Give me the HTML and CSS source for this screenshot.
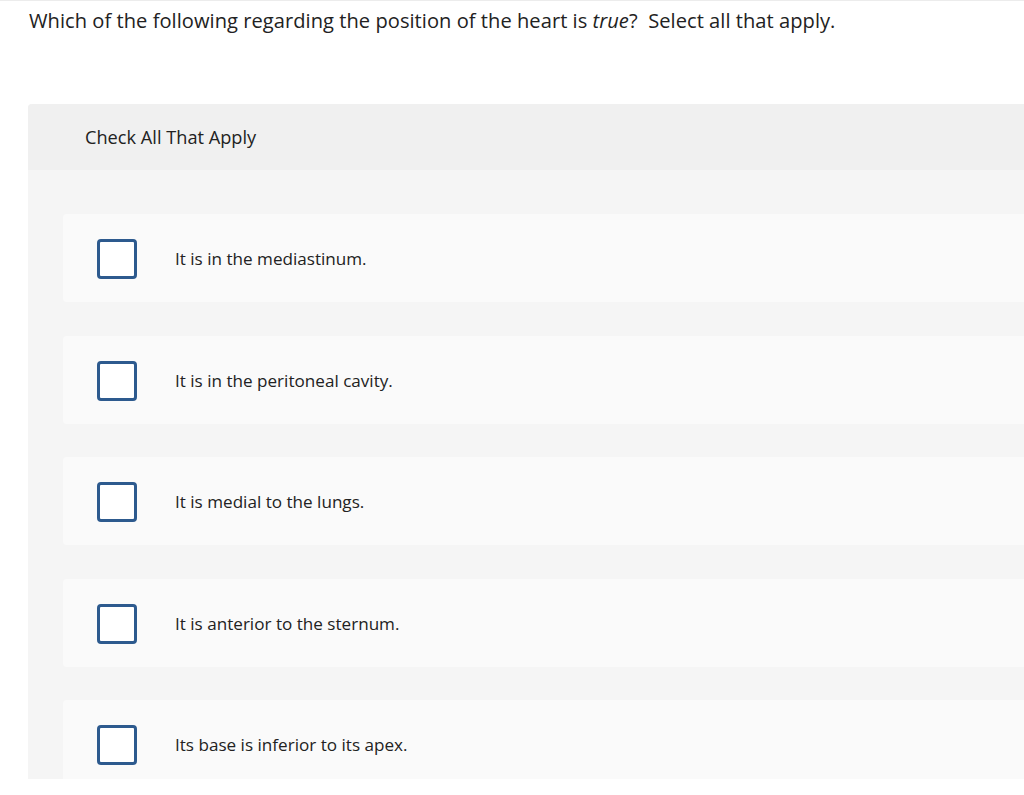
FILE: index.html
```html
<!DOCTYPE html>
<html lang="en">
<head>
<meta charset="utf-8">
<title>Question</title>
<link rel="stylesheet" href="styles.css">
</head>
<body>
<div class="page">
  <p class="question">Which of the following regarding the position of the heart is <em>true</em>?&nbsp; Select all that apply.</p>
  <section class="panel">
    <div class="panel-head">Check All That Apply</div>
    <div class="panel-body">
      <label class="option"><span class="box"></span><span class="opt-text">It is in the mediastinum.</span></label>
      <label class="option"><span class="box"></span><span class="opt-text">It is in the peritoneal cavity.</span></label>
      <label class="option"><span class="box"></span><span class="opt-text">It is medial to the lungs.</span></label>
      <label class="option"><span class="box"></span><span class="opt-text">It is anterior to the sternum.</span></label>
      <label class="option"><span class="box"></span><span class="opt-text">Its base is inferior to its apex.</span></label>
    </div>
  </section>
</div>
</body>
</html>
```
FILE: styles.css
```css
html, body {
  margin: 0;
  padding: 0;
  background: #ffffff;
  overflow: hidden;
}
body {
  font-family: "Open Sans", "Liberation Sans", sans-serif;
  color: #222222;
  height: 795px;
}
.page {
  border-top: 1px solid #ececec;
  padding-left: 28px;
}
.question {
  margin: 0;
  padding: 6px 0 0 1px;
  font-size: 20.1px;
  letter-spacing: 0.04px;
  line-height: 28px;
  height: 96px;
  box-sizing: border-box;
  white-space: nowrap;
}
.panel {
  margin-top: 7px;
  background: #f5f5f5;
  border-top-left-radius: 4px;
  overflow: hidden;
  height: 675px;
}
.panel-head {
  background: #f0f0f0;
  height: 66px;
  display: flex;
  align-items: center;
  padding-left: 57px;
  font-size: 18.2px;
}
.panel-body {
  padding: 44px 0 0 35px;
  display: flex;
  flex-direction: column;
  gap: 33.5px;
}
.option {
  background: #fafafa;
  height: 88px;
  border-radius: 4px 0 0 4px;
  display: flex;
  align-items: center;
  padding-left: 34px;
  flex-shrink: 0;
}
.box {
  width: 40px;
  height: 40px;
  box-sizing: border-box;
  border: 3px solid #2d5a8e;
  border-radius: 4px;
  background: #ffffff;
  flex-shrink: 0;
  margin-top: 2px;
}
.opt-text {
  margin-left: 38px;
  font-size: 17.1px;
  margin-top: 1px;
}
```
